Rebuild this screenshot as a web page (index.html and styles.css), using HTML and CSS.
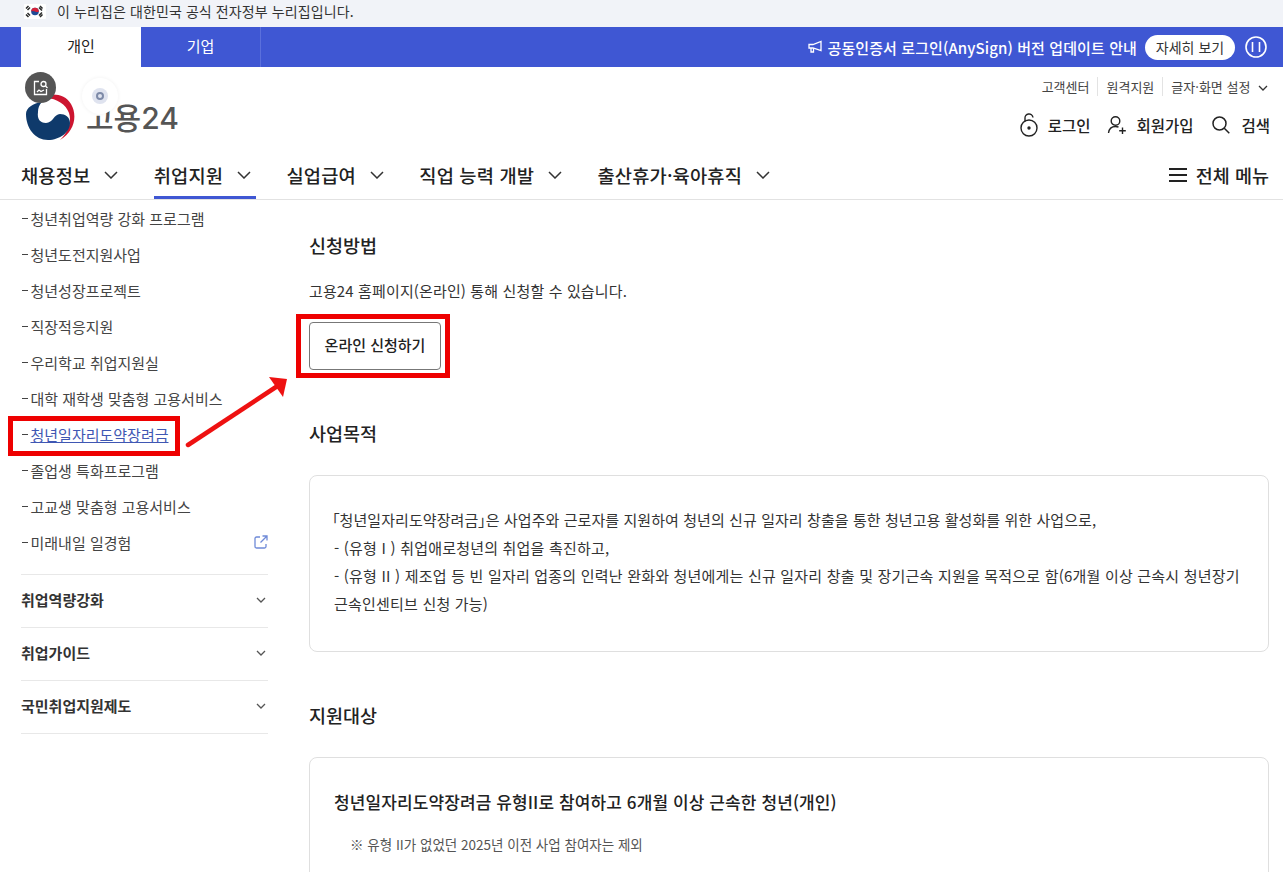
FILE: index.html
```html
<!DOCTYPE html>
<html lang="ko">
<head>
    <meta charset="UTF-8">
    <meta name="viewport" content="width=device-width, initial-scale=1.0">
    <title>고용24</title>
    <link rel="stylesheet" href="styles.css">
</head>
<body>
    <div class="gov-bar">
        <svg class="flag" viewBox="0 0 22 15" width="22" height="15">
            <rect width="22" height="15" rx="1" fill="#fff"/>
            <circle cx="11" cy="7.500" r="3.800" fill="#1f4a96"/>
            <path d="M7.200 7.500a3.800 3.800 0 0 1 7.600 0c-1 1-2.500 .6-3.800 0-1.300-.6-2.800-1-3.800 0z" fill="#d4213a"/>
            <g stroke="#2a2a2a" stroke-width="1.500">
                <path d="M2 4.500L4.500 2M3.500 6L6 3.500M16 2l2.500 2.500M15 3.500L18 6.500M2 10.500L4.500 13M3.500 9L6 11.500M18.500 10.500L16 13M18 8.500L15 11.500"/>
            </g>
        </svg>
        <span>이 누리집은 대한민국 공식 전자정부 누리집입니다.</span>
    </div>

    <div class="top-bar">
        <div class="top-tabs">
            <div class="top-tab active">개인</div>
            <div class="top-tab">기업</div>
        </div>
        <div class="notice">
            <svg width="15" height="14" viewBox="0 0 15 14" fill="none" stroke="#fff" stroke-width="1.300">
                <path d="M1 4.500h4L13 1.500v9L5 8H1zM3 8v4h2.500V8.500"/>
            </svg>
            <span class="notice-text">공동인증서 로그인(AnySign) 버전 업데이트 안내</span>
            <span class="notice-more">자세히 보기</span>
            <span class="notice-pause">
                <svg width="22" height="22" viewBox="0 0 22 22" fill="none" stroke="#fff" stroke-width="1.600">
                    <circle cx="11" cy="11" r="10"/>
                    <path d="M7.500 6v10M14.500 6v10"/>
                </svg>
            </span>
        </div>
    </div>

    <header class="header">
        <div class="logo">
            <svg width="52" height="50" viewBox="0 0 52 50">
                <path d="M12 9C22 0 40 0 47 12 54 24 50 40 36 48 44 40 48 30 45 21 41 9 24 2 12 9z" fill="#cd1530"/>
                <path d="M2 22C2 36 11 48 24 48 36 48 46 40 46 31 46 25 41 22 36 22 30 22 29 31 22 31 16 31 13 27 14 20 14 16 15 13 18 10 9 11 2 16 2 22z" fill="#0f3a6b"/>
            </svg>
            <span class="logo-text">고용24</span>
            <span class="float-btn dark">
                <svg width="18" height="18" viewBox="0 0 18 18" fill="none" stroke="#fff" stroke-width="1.300">
                    <path d="M7 2.500H2.500v13h12V10"/>
                    <circle cx="11.500" cy="5" r="2.500"/>
                    <path d="M13.500 7l2 2M5 13l2-2 2 1.500 3-1.500"/>
                </svg>
            </span>
            <span class="float-btn light">
                <svg width="20" height="20" viewBox="0 0 20 20" fill="none">
                    <circle cx="10" cy="10" r="8" fill="#dfe3ef"/>
                    <circle cx="10" cy="10" r="3" stroke="#7d8aa8" stroke-width="2"/>
                </svg>
            </span>
        </div>
        <div class="header-right">
            <ul class="util-links">
                <li>고객센터</li>
                <li>원격지원</li>
                <li>
                    글자·화면 설정
                    <svg class="util-arrow" width="10" height="6" viewBox="0 0 10 6" fill="none" stroke="#333" stroke-width="1.300"><path d="M1 1l4 4 4-4"/></svg>
                </li>
            </ul>
            <div class="user-links">
                <a class="user-link">
                    <svg width="18" height="24" viewBox="0 0 18 24" fill="none" stroke="#222" stroke-width="1.400">
                        <circle cx="9" cy="15" r="8"/>
                        <path d="M5 8.500V5.500a4 4 0 0 1 8-1"/>
                        <circle cx="9" cy="15" r="1" fill="#222"/>
                    </svg>
                    로그인
                </a>
                <a class="user-link join">
                    <svg width="20" height="20" viewBox="0 0 20 20" fill="none" stroke="#222" stroke-width="1.400">
                        <circle cx="8.500" cy="6" r="4.300"/>
                        <path d="M1.500 18c.5-4 3-6.500 7-6.500 1 0 2 .2 3 .5M15.500 12.500v6.500M12.200 15.800h6.600"/>
                    </svg>
                    회원가입
                </a>
                <a class="user-link">
                    <svg width="20" height="20" viewBox="0 0 20 20" fill="none" stroke="#222" stroke-width="1.500">
                        <circle cx="8.500" cy="8.500" r="6.500"/>
                        <path d="M13.300 13.300l5 5"/>
                    </svg>
                    검색
                </a>
            </div>
        </div>
    </header>

    <nav class="main-nav">
        <div class="nav-items">
            <div class="nav-item">채용정보<svg class="chev" width="14" height="8" viewBox="0 0 14 8" fill="none" stroke="#333" stroke-width="1.500"><path d="M1 1l6 6 6-6"/></svg></div>
            <div class="nav-item active">취업지원<svg class="chev" width="14" height="8" viewBox="0 0 14 8" fill="none" stroke="#333" stroke-width="1.500"><path d="M1 1l6 6 6-6"/></svg></div>
            <div class="nav-item">실업급여<svg class="chev" width="14" height="8" viewBox="0 0 14 8" fill="none" stroke="#333" stroke-width="1.500"><path d="M1 1l6 6 6-6"/></svg></div>
            <div class="nav-item">직업 능력 개발<svg class="chev" width="14" height="8" viewBox="0 0 14 8" fill="none" stroke="#333" stroke-width="1.500"><path d="M1 1l6 6 6-6"/></svg></div>
            <div class="nav-item">출산휴가·육아휴직<svg class="chev" width="14" height="8" viewBox="0 0 14 8" fill="none" stroke="#333" stroke-width="1.500"><path d="M1 1l6 6 6-6"/></svg></div>
        </div>
        <div class="all-menu">
            <svg width="18" height="16" viewBox="0 0 18 16" fill="none" stroke="#222" stroke-width="2"><path d="M0 2h18M0 8h18M0 14h18"/></svg>
            전체 메뉴
        </div>
    </nav>

    <div class="page">
        <aside class="sidebar">
            <ul class="side-list">
                <li>청년취업역량 강화 프로그램</li>
                <li>청년도전지원사업</li>
                <li>청년성장프로젝트</li>
                <li>직장적응지원</li>
                <li>우리학교 취업지원실</li>
                <li>대학 재학생 맞춤형 고용서비스</li>
                <li class="current"><a>청년일자리도약장려금</a></li>
                <li>졸업생 특화프로그램</li>
                <li>고교생 맞춤형 고용서비스</li>
                <li class="external">
                    미래내일 일경험
                    <svg width="14" height="14" viewBox="0 0 14 14" fill="none" stroke="#6f8ad8" stroke-width="1.300">
                        <path d="M6 2H2.500A1.500 1.500 0 0 0 1 3.500v8A1.500 1.500 0 0 0 2.500 13h8a1.500 1.500 0 0 0 1.500-1.500V9M8.500 1H13v4.500M13 1L6.500 7.500"/>
                    </svg>
                </li>
            </ul>
            <div class="side-group">취업역량강화<svg width="10" height="6" viewBox="0 0 10 6" fill="none" stroke="#555" stroke-width="1.300"><path d="M1 1l4 4 4-4"/></svg></div>
            <div class="side-group">취업가이드<svg width="10" height="6" viewBox="0 0 10 6" fill="none" stroke="#555" stroke-width="1.300"><path d="M1 1l4 4 4-4"/></svg></div>
            <div class="side-group">국민취업지원제도<svg width="10" height="6" viewBox="0 0 10 6" fill="none" stroke="#555" stroke-width="1.300"><path d="M1 1l4 4 4-4"/></svg></div>
        </aside>

        <main class="content">
            <section class="apply">
                <h2>신청방법</h2>
                <p class="apply-text">고용24 홈페이지(온라인) 통해 신청할 수 있습니다.</p>
                <button class="apply-button">온라인 신청하기</button>
            </section>

            <section class="purpose">
                <h2>사업목적</h2>
                <div class="box">
                    <p class="lead"><span class="quote">「청년일자리도약장려금」</span>은 사업주와 근로자를 지원하여 청년의 신규 일자리 창출을 통한 청년고용 활성화를 위한 사업으로,</p>
                    <p>- (유형 I ) 취업애로청년의 취업을 촉진하고,</p>
                    <p>- (유형 II ) 제조업 등 빈 일자리 업종의 인력난 완화와 청년에게는 신규 일자리 창출 및 장기근속 지원을 목적으로 함(6개월 이상 근속시 청년장기<br>근속인센티브 신청 가능)</p>
                </div>
            </section>

            <section class="target">
                <h2>지원대상</h2>
                <div class="box box-target">
                    <h3>청년일자리도약장려금 유형II로 참여하고 6개월 이상 근속한 청년(개인)</h3>
                    <p class="note">※ 유형 II가 없었던 2025년 이전 사업 참여자는 제외</p>
                </div>
            </section>
        </main>
    </div>

    <!-- red marks drawn over the page -->
    <div class="mark mark-side"></div>
    <div class="mark mark-button"></div>
    <svg class="mark-arrow" width="110" height="80" viewBox="0 0 110 80">
        <path d="M4 73L92 15" stroke="#ee1111" stroke-width="4.500" stroke-linecap="round"/>
        <path d="M103 7L85 5 99 25z" fill="#ee1111"/>
    </svg>
</body>
</html>
```

FILE: styles.css
```css
* {
    margin: 0;
    padding: 0;
    box-sizing: border-box;
    font-family: 'Noto Sans CJK KR', 'Noto Sans', sans-serif;
}

html,
body {
    height: 872px;
    overflow: hidden;
}

body {
    position: relative;
    background-color: white;
    color: #222;
}

ul {
    list-style: none;
}

.gov-bar {
    display: flex;
    align-items: center;
    gap: 11px;
    height: 27px;
    padding: 0 0 5px 24px;
    background-color: #f1f3f8;
    font-size: 14px;
    letter-spacing: 0.1px;
    color: #333;
}

.top-bar {
    display: flex;
    justify-content: space-between;
    height: 40px;
    padding: 0 16px 0 21px;
    background-color: #3f57d3;
}

.top-tabs {
    display: flex;
}

.top-tab {
    width: 120px;
    padding-bottom: 2px;
    line-height: 38px;
    text-align: center;
    font-size: 15px;
    color: white;
    border-right: 1px solid #5b70dc;
}

.top-tab.active {
    background-color: white;
    color: #222;
    border-right: none;
}

.notice {
    display: flex;
    align-items: center;
    color: white;
}

.notice-text {
    margin-left: 4px;
    font-size: 15px;
    font-weight: 500;
    letter-spacing: 0.1px;
}

.notice-more {
    width: 90px;
    height: 25px;
    margin-left: 8px;
    line-height: 25px;
    text-align: center;
    border-radius: 13px;
    background-color: white;
    color: #333;
    font-size: 14px;
}

.notice-pause {
    display: flex;
    margin-left: 10px;
}

.header {
    display: flex;
    justify-content: space-between;
    height: 88px;
    padding: 0 13px 0 21px;
}

.logo {
    position: relative;
    display: flex;
    align-items: center;
    gap: 10px;
    height: 100%;
    padding: 12px 0 0 3px;
}

.logo-text {
    margin-top: -3px;
    font-family: 'Inter', 'Noto Sans CJK KR', sans-serif;
    font-size: 30px;
    font-weight: 500;
    color: #555;
}

.float-btn {
    position: absolute;
    display: flex;
    align-items: center;
    justify-content: center;
    border-radius: 50%;
}

.float-btn.dark {
    left: 4px;
    top: 5px;
    width: 31px;
    height: 31px;
    background-color: #555;
}

.float-btn.light {
    left: 61px;
    top: 11px;
    width: 36px;
    height: 36px;
    background-color: white;
    box-shadow: 0 0 4px rgba(0, 0, 0, 0.06);
}

.header-right {
    display: flex;
    flex-direction: column;
    align-items: flex-end;
}

.util-links {
    display: flex;
    align-items: center;
    margin-top: 10px;
    padding-right: 2px;
    font-size: 13px;
    color: #444;
}

.util-links li + li {
    margin-left: 8px;
    padding-left: 8px;
    border-left: 1px solid #e3e3e3;
}

.util-arrow {
    margin-left: 4px;
    vertical-align: 1px;
}

.user-links {
    display: flex;
    gap: 16px;
    margin-top: 17px;
}

.user-link {
    display: flex;
    align-items: center;
    gap: 10px;
    font-size: 15.5px;
    font-weight: 500;
    color: #222;
}

.user-link.join {
    gap: 9px;
    margin-left: 1px;
}

.user-link:last-child {
    margin-left: 2px;
}

.main-nav {
    display: flex;
    justify-content: space-between;
    align-items: stretch;
    height: 45px;
    padding: 0 14px 0 21px;
    border-bottom: 1px solid #e2e2e2;
}

.nav-items {
    display: flex;
    gap: 30.4px;
}

.nav-item {
    display: flex;
    align-items: center;
    gap: 14px;
    height: 44px;
    padding-right: 5px;
    padding-bottom: 5px;
    font-size: 18.7px;
    font-weight: 500;
    letter-spacing: 0.15px;
    color: #222;
}

.nav-item.active {
    border-bottom: 3px solid #3f57d3;
    padding-bottom: 2px;
}

.all-menu {
    display: flex;
    align-items: center;
    gap: 9px;
    padding-bottom: 5px;
    font-size: 18.500px;
    font-weight: 500;
}

.page {
    display: flex;
    gap: 41px;
    height: 673px;
    padding: 0 14px 0 21px;
    overflow: hidden;
}

.sidebar {
    width: 247px;
    flex-shrink: 0;
}

.side-list {
    padding-bottom: 14px;
}

.side-list li {
    position: relative;
    display: flex;
    justify-content: space-between;
    align-items: center;
    height: 36px;
    padding-left: 9.5px;
    font-size: 15px;
    color: #444;
}

.side-list li::before {
    content: "";
    position: absolute;
    left: 1px;
    top: 18px;
    width: 6px;
    height: 1px;
    background-color: #444;
}

.side-list li.current a {
    color: #3f57b3;
    text-decoration: underline;
}

.side-group {
    display: flex;
    justify-content: space-between;
    align-items: center;
    height: 53px;
    padding-right: 2px;
    padding-bottom: 3px;
    border-top: 1px solid #e8e8e8;
    font-size: 15px;
    font-weight: 700;
    color: #333;
}

.side-group:last-child {
    height: 54px;
    border-bottom: 1px solid #e8e8e8;
}

.content {
    flex: 1;
    min-width: 0;
}

h2 {
    font-size: 18.500px;
    font-weight: 500;
    line-height: 26px;
    color: #222;
}

.apply {
    padding-top: 32px;
}

.apply-text {
    margin-top: 23px;
    font-size: 15px;
    line-height: 20px;
    letter-spacing: 0.13px;
    color: #333;
}

.apply-button {
    display: block;
    width: 132px;
    height: 48px;
    margin-top: 21px;
    padding-bottom: 3px;
    background-color: white;
    border: 1px solid #777;
    border-radius: 4px;
    font-size: 15px;
    font-weight: 500;
    color: #222;
}

.purpose {
    padding-top: 50px;
}

.box {
    margin-top: 29px;
    padding: 30px 24px 33px;
    border: 1px solid #dfdfdf;
    border-radius: 8px;
}

.box p {
    font-size: 15px;
    line-height: 28px;
    letter-spacing: 0.2px;
    color: #333;
}

.box .lead {
    letter-spacing: 0.07px;
}

.quote {
    margin-left: -2px;
    font-feature-settings: "palt";
}

.target {
    padding-top: 50px;
}

.box-target {
    height: 200px;
    padding-top: 31px;
}

h3 {
    font-size: 17px;
    font-weight: 500;
    line-height: 26px;
    letter-spacing: 0.1px;
    color: #222;
}

.box .note {
    margin-top: 15px;
    padding-left: 16px;
    font-size: 13.500px;
    letter-spacing: 0;
    color: #555;
}

.mark {
    position: absolute;
    border: 5px solid #ee0000;
}

.mark-side {
    left: 8px;
    top: 416px;
    width: 172px;
    height: 40px;
}

.mark-button {
    left: 296px;
    top: 314px;
    width: 154px;
    height: 64px;
}

.mark-arrow {
    position: absolute;
    left: 184px;
    top: 372px;
}
```
